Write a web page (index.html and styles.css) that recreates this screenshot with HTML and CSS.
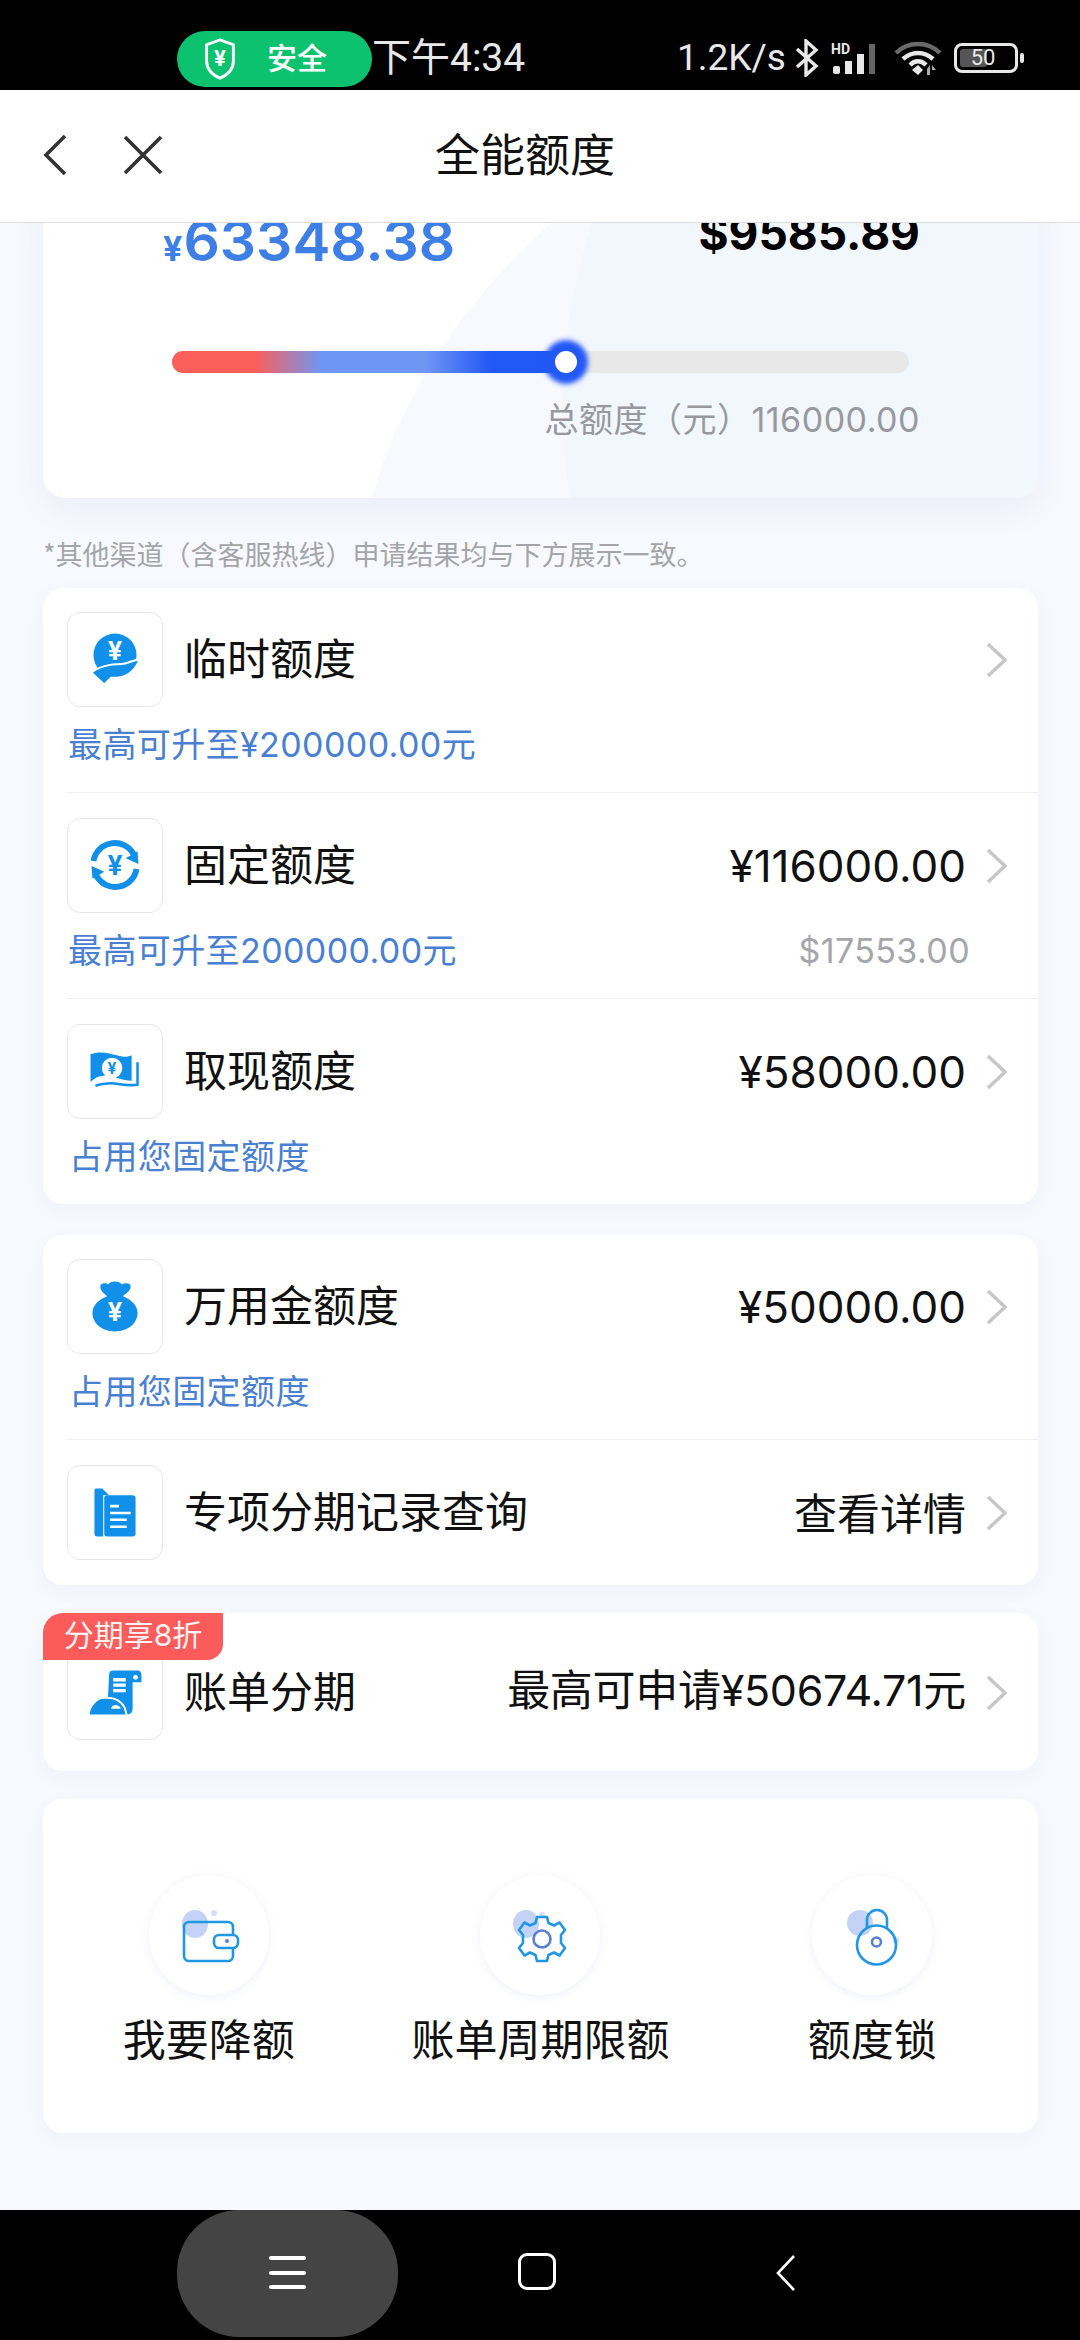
FILE: index.html
```html
<!DOCTYPE html>
<html lang="zh-CN">
<head>
<meta charset="utf-8">
<title>全能额度</title>
<link rel="stylesheet" href="styles.css">
</head>
<body>
<div class="phone">
  <header class="status">
    <div class="safe">
      <svg class="safe-icon" viewBox="0 0 34 44"><path d="M17 2 L31 7 V24 C31 33 24 39 17 42 C10 39 3 33 3 24 V7 Z" fill="none" stroke="#fff" stroke-width="3"/><text x="17" y="29" class="yuan-w" font-size="22" text-anchor="middle">¥</text></svg>
      <span class="safe-text">安全</span>
    </div>
    <span class="time">下午4:34</span>
    <div class="sys">
      <span class="speed">1.2K/s</span>
      <svg class="bt" viewBox="0 0 26 38"><path d="M3 10 L22 27 L12 36 V2 L22 11 L3 28" fill="none" stroke="#e8e8e8" stroke-width="3.4"/></svg>
      <svg class="signal" viewBox="0 0 50 32"><text x="0" y="12" class="hd">HD</text><rect x="2" y="24" width="7" height="8" rx="2" fill="#e8e8e8"/><rect x="14" y="19" width="7" height="13" fill="#e8e8e8"/><rect x="26" y="12" width="7" height="20" fill="#e8e8e8"/><rect x="38" y="2" width="6" height="30" fill="#666"/></svg>
      <svg class="wifi" viewBox="0 0 48 36"><path d="M2 13 C14 1 34 1 46 13" fill="none" stroke="#6a6a6a" stroke-width="4.5"/><path d="M9 19 C18 11 30 11 39 19" fill="none" stroke="#e8e8e8" stroke-width="4.5"/><path d="M16 25 C21 20 27 20 32 25" fill="none" stroke="#e8e8e8" stroke-width="4.5"/><path d="M18 30 L24 25 L29 30 L24 35 Z" fill="#e8e8e8"/><path d="M33 29 L36 25 V35 H33 Z M38 25 L42 30 H38 V35 Z" fill="#aaa"/></svg>
      <div class="batt"><div class="batt-box"><div class="batt-fill"></div><span class="batt-num">50</span></div><div class="batt-nub"></div></div>
    </div>
  </header>

  <nav class="nav">
    <svg class="nav-back" viewBox="0 0 24 42"><path d="M22 2 L3 21 L22 40" fill="none" stroke="#333" stroke-width="3.6"/></svg>
    <svg class="nav-close" viewBox="0 0 40 40"><path d="M2 2 L38 38 M38 2 L2 38" fill="none" stroke="#333" stroke-width="3.6"/></svg>
    <h1 class="nav-title">全能额度</h1>
  </nav>

  <main class="content">
    <section class="hero">
      <svg class="hero-bg" viewBox="0 0 995 305" preserveAspectRatio="none"><path d="M329 305 C360 190 440 80 545 0 L995 0 L995 305 Z" fill="#f7f9fe"/><path d="M528 305 C510 220 518 110 560 0 L995 0 L995 305 Z" fill="#f2f6fd"/></svg>
      <div class="amounts">
        <div class="amt-cny"><span class="amt-sym">¥</span>63348.38</div>
        <div class="amt-usd">$9585.89</div>
      </div>
      <div class="track"><div class="fill"><span class="knob"></span></div></div>
      <div class="total">总额度（元）116000.00</div>
    </section>

    <p class="note">*其他渠道（含客服热线）申请结果均与下方展示一致。</p>

    <section class="card card-a">
      <div class="row">
        <div class="row-top">
          <div class="ico"><svg viewBox="0 0 96 95"><circle cx="48" cy="43" r="22" fill="#1090e8"/><text x="48" y="48" class="yuan-w" font-size="26" text-anchor="middle">¥</text><path d="M24 61 C30 56 37 54 43 53 C50 52 58 53 63 50 L73 47 C70 57 62 65 50 66 L44 66 L37 73 Z" fill="#1090e8" stroke="#fff" stroke-width="2"/></svg></div>
          <span class="title">临时额度</span>
          <svg class="chev" viewBox="0 0 26 38"><path d="M4 3 L21 19 L4 35" fill="none" stroke="#c6c6c6" stroke-width="3.4"/></svg>
        </div>
        <div class="sub"><span>最高可升至¥200000.00元</span></div>
      </div>
      <div class="row">
        <div class="row-top">
          <div class="ico"><svg viewBox="0 0 96 95"><path d="M26 43 A22 22 0 0 1 67 36" fill="none" stroke="#1090e8" stroke-width="6"/><path d="M70 51 A22 22 0 0 1 29 58" fill="none" stroke="#1090e8" stroke-width="6"/><path d="M59 40 L72 46 L71 33 Z M37 54 L24 48 L25 61 Z" fill="#1090e8"/><text x="48" y="57" class="yuan-b" font-size="27" text-anchor="middle">¥</text></svg></div>
          <span class="title">固定额度</span>
          <span class="amount">¥116000.00</span>
          <svg class="chev" viewBox="0 0 26 38"><path d="M4 3 L21 19 L4 35" fill="none" stroke="#c6c6c6" stroke-width="3.4"/></svg>
        </div>
        <div class="sub"><span>最高可升至200000.00元</span><span class="usd">$17553.00</span></div>
      </div>
      <div class="row row-last">
        <div class="row-top">
          <div class="ico"><svg viewBox="0 0 96 95"><path d="M23 30 C33 26 42 29 50 31 C56 33 61 33 65 31 V57 C55 57 45 51 35 52 C30 52 27 55 23 58 Z" fill="#1090e8"/><circle cx="45" cy="44" r="10.5" fill="#fff"/><text x="45" y="50" class="yuan-b" font-size="16" text-anchor="middle">¥</text><path d="M71 38 V61 C58 63 48 58 38 60 C34 60 31 61 28 62" fill="none" stroke="#1090e8" stroke-width="2.6"/></svg></div>
          <span class="title">取现额度</span>
          <span class="amount">¥58000.00</span>
          <svg class="chev" viewBox="0 0 26 38"><path d="M4 3 L21 19 L4 35" fill="none" stroke="#c6c6c6" stroke-width="3.4"/></svg>
        </div>
        <div class="sub sub-in"><span>占用您固定额度</span></div>
      </div>
    </section>

    <section class="card card-b">
      <div class="row">
        <div class="row-top">
          <div class="ico"><svg viewBox="0 0 96 95"><path d="M33 27 C33 23 39 23 41 25 C43 21 53 21 55 25 C58 23 64 23 64 27 C64 32 58 35 56 37 C66 41 71 47 71 54 C71 66 60 73 48 73 C36 73 25 66 25 54 C25 47 30 41 40 37 C38 35 33 32 33 27 Z" fill="#1090e8"/><text x="48" y="62" class="yuan-w" font-size="26" text-anchor="middle">¥</text></svg></div>
          <span class="title">万用金额度</span>
          <span class="amount">¥50000.00</span>
          <svg class="chev" viewBox="0 0 26 38"><path d="M4 3 L21 19 L4 35" fill="none" stroke="#c6c6c6" stroke-width="3.4"/></svg>
        </div>
        <div class="sub sub-in"><span>占用您固定额度</span></div>
      </div>
      <div class="row row-last row-plain">
        <div class="row-top">
          <div class="ico"><svg viewBox="0 0 96 95"><path d="M27 25 C27 23 28 23 30 23 H35 L42 30 H36 V72 H30 C28 72 27 71 27 69 Z" fill="#1090e8"/><rect x="37" y="30" width="32" height="42" rx="3" fill="#1090e8"/><path d="M43 41 H52 M43 48 H64 M43 55 H60 M43 62 H60" stroke="#fff" stroke-width="2.6" fill="none"/></svg></div>
          <span class="title">专项分期记录查询</span>
          <span class="amount amount-cn">查看详情</span>
          <svg class="chev" viewBox="0 0 26 38"><path d="M4 3 L21 19 L4 35" fill="none" stroke="#c6c6c6" stroke-width="3.4"/></svg>
        </div>
      </div>
    </section>

    <section class="card card-c">
      <span class="tag">分期享8折</span>
      <div class="row-top">
        <div class="ico"><svg viewBox="0 0 96 95"><path d="M42 29 C42 26 44 25 47 25 H71 C74 25 75 27 75 30 V37 H66 V64 C66 68 63 70 60 70 H40 Z" fill="#1090e8"/><circle cx="69" cy="32" r="2.5" fill="#fff"/><path d="M46 34.500 H59 M46 40 H59 M46 45.500 H59" stroke="#fff" stroke-width="3.4" fill="none"/><path d="M21 70 C22 60 30 53 37 53 C47 52 54 56 58 63 L60 71 H24 C22 71 21 71 21 70 Z" fill="#1090e8" stroke="#fff" stroke-width="2"/><path d="M44 64 C45 59 52 59 54 64 Z" fill="#fff"/></svg></div>
        <span class="title">账单分期</span>
        <span class="amount amount-mix">最高可申请¥50674.71元</span>
        <svg class="chev" viewBox="0 0 26 38"><path d="M4 3 L21 19 L4 35" fill="none" stroke="#c6c6c6" stroke-width="3.4"/></svg>
      </div>
    </section>

    <section class="card card-d">
      <div class="act">
        <div class="circle"><svg viewBox="0 0 120 120"><ellipse cx="46" cy="49" rx="13" ry="14" fill="#c4d2f5"/><circle cx="65" cy="38" r="3" fill="#d5dff8"/><rect x="35" y="47" width="49" height="39" rx="5" fill="none" stroke="#2196e3" stroke-width="2.6"/><rect x="65" y="60" width="24" height="13" rx="5" fill="#fff" stroke="#2196e3" stroke-width="2.6"/><circle cx="78" cy="66" r="2" fill="#5b7fd0"/></svg></div>
        <span class="act-label">我要降额</span>
      </div>
      <div class="act">
        <div class="circle"><svg viewBox="0 0 120 120"><ellipse cx="46" cy="49" rx="13" ry="14" fill="#c4d2f5"/><circle cx="62" cy="40" r="3" fill="#d5dff8"/><path d="M57 42 H67 L68.500 48 L74 50.500 L79.500 47.500 L85 55 L81 60 V68 L85 73 L79.500 80.500 L74 77.500 L68.500 80 L67 86 H57 L55.500 80 L50 77.500 L44.500 80.500 L39 73 L43 68 V60 L39 55 L44.500 47.500 L50 50.500 L55.500 48 Z" fill="none" stroke="#2196e3" stroke-width="2.6" stroke-linejoin="round"/><circle cx="62" cy="64" r="8.500" fill="none" stroke="#5b7fd0" stroke-width="2.6"/></svg></div>
        <span class="act-label">账单周期限额</span>
      </div>
      <div class="act">
        <div class="circle"><svg viewBox="0 0 120 120"><ellipse cx="48" cy="48" rx="13" ry="13" fill="#c4d2f5"/><circle cx="84" cy="65" r="3.500" fill="#d5dff8"/><path d="M55 54 V45 A10 10 0 0 1 75 45 V54" fill="none" stroke="#2196e3" stroke-width="2.6"/><circle cx="64.500" cy="70" r="19.500" fill="none" stroke="#2196e3" stroke-width="2.6"/><circle cx="64.500" cy="67" r="4.500" fill="none" stroke="#5b7fd0" stroke-width="2.600"/></svg></div>
        <span class="act-label">额度锁</span>
      </div>
    </section>
  </main>

  <footer class="bottom">
    <div class="menu-pill"><span class="bar"></span><span class="bar"></span><span class="bar"></span></div>
    <div class="home"></div>
    <svg class="back" viewBox="0 0 20 36"><path d="M18 1 L2 18 L18 35" fill="none" stroke="#fff" stroke-width="2.6"/></svg>
  </footer>
</div>
</body>
</html>
```
FILE: styles.css
```css
* { box-sizing: border-box; }
html, body { margin: 0; padding: 0; }
body { font-family: Inter, "Noto Sans CJK SC", sans-serif; background: #000; }
.phone { width: 1080px; height: 2340px; display: flex; flex-direction: column; overflow: hidden; background: #f8f9fe; }

.yuan-w { fill: #fff; font-family: Inter, sans-serif; font-weight: 700; }
.yuan-b { fill: #1090e8; font-family: Inter, sans-serif; font-weight: 700; }

.status { height: 90px; flex: none; background: #000; display: flex; align-items: flex-start; color: #e8e8e8; font-family: Roboto, "Noto Sans CJK SC", sans-serif; }
.safe { margin: 31px 0 0 177px; width: 195px; height: 56px; border-radius: 28px; background: #0cc26f; display: flex; align-items: center; padding-left: 26px; }
.safe-icon { width: 34px; height: 42px; }
.safe-text { margin-left: 30px; font-size: 30px; line-height: 36px; color: #fff; font-weight: 500; }
.time { font-size: 39px; line-height: 56px; margin-top: 30px; }
.sys { margin-left: auto; padding-right: 56px; margin-top: 36px; display: flex; align-items: center; height: 44px; }
.speed { font-size: 37px; line-height: 44px; width: 115px; }
.bt { width: 28px; height: 38px; margin-left: 1px; }
.signal { width: 52px; height: 32px; margin-left: 9px; }
.hd { font: 700 14px Roboto, sans-serif; fill: #e8e8e8; }
.wifi { width: 48px; height: 36px; margin-left: 12px; }
.batt { display: flex; align-items: center; margin-left: 12px; }
.batt-box { position: relative; width: 64px; height: 30px; border: 3px solid #e8e8e8; border-radius: 8px; display: flex; align-items: center; justify-content: center; }
.batt-fill { position: absolute; left: 3px; top: 3px; bottom: 3px; width: 27px; background: #555; border-radius: 3px; }
.batt-num { position: relative; font-size: 22px; line-height: 24px; margin-left: -6px; }
.batt-nub { width: 4px; height: 10px; margin-left: 2px; background: #e8e8e8; border-radius: 2px; }

.nav { height: 133px; flex: none; background: #fff; border-bottom: 1.5px solid #dcdcdc; display: flex; align-items: center; padding-left: 43px; position: relative; z-index: 2; }
.nav-back { width: 24px; height: 42px; margin-bottom: 2px; }
.nav-close { width: 40px; height: 40px; margin-left: 56px; margin-bottom: 2px; }
.nav-title { margin: 0 0 7px 272px; font-size: 45px; font-weight: 400; color: #111; line-height: 60px; font-family: "Noto Sans CJK SC", sans-serif; }

.content { flex: 1; min-height: 0; overflow: hidden; padding: 0 42px 0 43px; }

.hero { position: relative; height: 305px; margin-top: -30px; background: #fff; border-radius: 22px; box-shadow: 0 12px 30px rgba(90, 120, 190, .08); overflow: hidden; padding: 0 118px 0 120px; }
.hero-bg { position: absolute; inset: 0; width: 100%; height: 100%; }
.amounts { position: relative; display: flex; justify-content: space-between; align-items: flex-start; height: 150px; }
.amt-cny { font-size: 57px; line-height: 70px; font-weight: 600; color: #3d7fe6; margin-top: 13px; }
.amt-sym { font-size: 34px; font-weight: 700; margin-right: 1px; }
.amt-usd { font-size: 46px; line-height: 60px; font-weight: 700; color: #000; margin-top: 10px; }
.track { position: relative; height: 22px; margin: 8px 11px 0 9px; border-radius: 11px; background: #e8e8e8; }
.fill { position: relative; height: 22px; width: 394px; border-radius: 11px; background: linear-gradient(90deg, #fb5f5a 0%, #fb5f5a 21%, #7096f3 38%, #7096f3 64%, #2258f5 81%, #2258f5 100%); }
.knob { position: absolute; right: -11px; top: 0; width: 22px; height: 22px; border-radius: 50%; background: #fff; box-shadow: 0 0 5px 11px #2258f5; }
.total { position: relative; margin-top: 25px; text-align: right; font-size: 34px; line-height: 44px; letter-spacing: .5px; color: #98999e; }

.note { margin: 0; height: 90px; padding-top: 36px; font-size: 27px; line-height: 40px; color: #a3a5a9; font-family: "Noto Sans CJK SC", sans-serif; }

.card { position: relative; background: #fff; border-radius: 20px; box-shadow: 0 6px 18px rgba(90, 120, 190, .05); padding: 24px 28px 0 24px; }
.card-a { height: 616px; }
.card-b { height: 350px; margin-top: 31px; }
.card-c { height: 158px; margin-top: 28px; padding-top: 32px; }
.card-d { height: 334px; margin-top: 28px; padding: 76px 0 0; display: grid; grid-template-columns: repeat(3, 1fr); }

.row { border-bottom: 1.5px solid #efefef; margin: 0 -28px 0 0; padding: 0 28px 0 0; height: 206px; }
.row + .row { padding-top: 25px; height: 206px; }
.row-last { border-bottom: 0; }
.row-plain { height: auto; }
.card-b .row:first-child { height: 181px; }
.card-a .row:first-child { height: 181px; }
.row-top { display: flex; align-items: center; height: 95px; }
.ico { width: 96px; height: 95px; flex: none; background: #fff; border: 1.5px solid #e8e8e8; border-radius: 13px; }
.ico svg { display: block; width: 100%; height: 100%; }
.title { margin: 0 0 8px 21px; font-size: 43px; line-height: 60px; color: #111; font-family: "Noto Sans CJK SC", sans-serif; }
.amount { margin-left: auto; font-size: 44px; line-height: 60px; color: #111; }
.amount-cn { font-size: 43px; margin-bottom: 4px; font-family: "Noto Sans CJK SC", sans-serif; }
.amount-mix { font-size: 43px; margin-bottom: 6px; letter-spacing: -.3px; }
.chev { width: 26px; height: 38px; margin-left: 18px; flex: none; }
.row-top > .title + .chev { margin-left: auto; }
.sub { display: flex; justify-content: space-between; margin-top: 18px; padding-left: 1px; padding-right: 40px; font-size: 34px; line-height: 40px; letter-spacing: .4px; color: #4a80d2; }
.sub-in { padding-left: 2px; }
.usd { color: #a5a6aa; font-size: 34px; }

.tag { position: absolute; left: 0; top: 0; z-index: 1; width: 180px; height: 47px; background: #fb5c5b; color: #fff2f0; border-radius: 20px 0 16px 0; font-size: 30px; line-height: 44px; text-align: center; }

.act { display: flex; flex-direction: column; align-items: center; }
.circle { width: 120px; height: 120px; border-radius: 50%; background: #fff; box-shadow: 0 2px 10px rgba(120, 140, 220, .12); }
.circle svg { display: block; width: 120px; height: 120px; }
.act-label { margin-top: 12px; font-size: 43px; line-height: 60px; color: #111; font-family: "Noto Sans CJK SC", sans-serif; }

.bottom { height: 130px; flex: none; background: #000; display: flex; align-items: flex-start; }
.menu-pill { margin-left: 177px; width: 221px; height: 127px; background: #444; border-radius: 62px; display: flex; flex-direction: column; align-items: center; gap: 10.5px; padding-top: 46px; }
.bar { width: 37px; height: 4px; background: #fff; border-radius: 2px; }
.home { margin: 43px 0 0 120px; width: 38px; height: 37px; border: 3.5px solid #fff; border-radius: 9px; }
.back { width: 20px; height: 36px; margin: 45px 0 0 220px; }
```
